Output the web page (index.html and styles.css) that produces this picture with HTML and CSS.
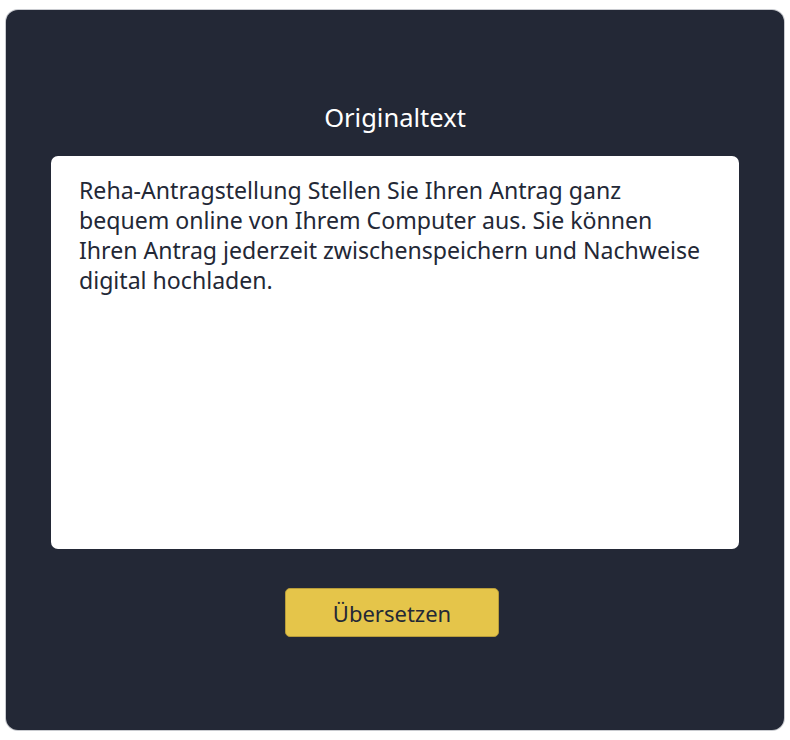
FILE: index.html
```html
<!DOCTYPE html>
<html lang="de">
<head>
<meta charset="utf-8">
<title>Originaltext</title>
<link rel="stylesheet" href="styles.css">
</head>
<body>
<main class="panel">
  <h1 class="title">Originaltext</h1>
  <div class="textbox">Reha-Antragstellung Stellen Sie Ihren Antrag ganz bequem online von Ihrem Computer aus. Sie können Ihren Antrag jederzeit zwischenspeichern und Nachweise digital hochladen.</div>
  <button class="btn" type="button">Übersetzen</button>
</main>
</body>
</html>
```
FILE: styles.css
```css
html, body {
  margin: 0;
  background: #ffffff;
}
body {
  padding: 10px 6px;
  font-family: "Noto Sans", "Open Sans", sans-serif;
}
.panel {
  box-sizing: border-box;
  width: 778px;
  height: 720px;
  background: #232836;
  border-radius: 12px;
  box-shadow: 0 0 0 1px #c9cbd0;
  padding: 90px 45px 0;
  display: flex;
  flex-direction: column;
  align-items: center;
}
.title {
  margin: 0;
  font-size: 25.5px;
  line-height: 34px;
  font-weight: 400;
  color: #ffffff;
}
.textbox {
  box-sizing: border-box;
  align-self: stretch;
  margin-top: 22px;
  height: 393px;
  background: #ffffff;
  border-radius: 7px;
  padding: 19px 28px;
  font-size: 23.1px;
  line-height: 30px;
  color: #232836;
}
.btn {
  margin-top: 39px;
  margin-right: 6px;
  width: 214px;
  height: 49px;
  background: #e5c54a;
  border: 1px solid #b89c3a;
  border-radius: 5px;
  font-family: inherit;
  font-size: 22px;
  color: #232836;
  padding: 0;
}
```
